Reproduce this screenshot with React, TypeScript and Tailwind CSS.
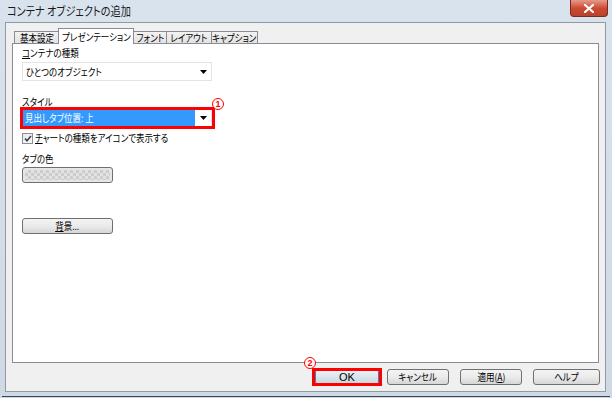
import React from 'react';

const jp = "font-['Meiryo_UI','Noto_Sans_CJK_JP','Noto_Sans',sans-serif] [font-feature-settings:'palt']";

const tabs = [
  { label: '基本設定', w: 'w-[45px]' },
  { label: 'プレゼンテーション', w: 'w-[76px]', active: true },
  { label: 'フォント', w: 'w-[34px]' },
  { label: 'レイアウト', w: 'w-[46px]' },
  { label: 'キャプション', w: 'w-[47px]' },
];

// Meiryo UI is narrower than Noto CJK, squeeze the text a bit
function Sq({ children, center }: { children: React.ReactNode; center?: boolean }) {
  return (
    <span className={`inline-block whitespace-nowrap scale-x-[0.85] ${center ? 'origin-center' : 'origin-left'}`}>
      {children}
    </span>
  );
}

function Arrow() {
  return (
    <svg width="7" height="4" viewBox="0 0 7 4">
      <path d="M0 0h7L3.5 4z" fill="#000" />
    </svg>
  );
}

function Mark({ n }: { n: string }) {
  return (
    <span className="flex h-[12px] w-[12px] items-center justify-center rounded-full border-[1.5px] border-[#ff0000] bg-white font-['Liberation_Sans',sans-serif] text-[9px] font-bold leading-none text-[#ff0000]">
      {n}
    </span>
  );
}

function Btn({ children, w, primary }: { children: React.ReactNode; w: string; primary?: boolean }) {
  return (
    <div
      className={`${w} flex h-[16px] items-center justify-center rounded-[3px] border text-[10px] leading-[14px] ${
        primary
          ? 'border-[#3c7fb1] bg-gradient-to-b from-[#edf3f7] to-[#c6d6e2]'
          : 'border-[#707070] bg-gradient-to-b from-[#f3f3f3] via-[#ebebeb] to-[#d6d6d6]'
      }`}
    >
      {children}
    </div>
  );
}

export default function App() {
  return (
    <div className={`${jp} flex h-[398px] w-[612px] flex-col bg-gradient-to-b from-[#d9e3ed] to-[#cfd9e3] text-black`}>
      {/* title bar */}
      <div className="flex h-[22px] items-start pl-[7px]">
        <span className="mt-[4px] text-[12px] leading-[14px] text-[#1a1a1a]">
          <Sq>コンテナ オブジェクトの追加</Sq>
        </span>
        <div className="ml-auto mr-[4px] flex h-[17px] w-[38px] items-center justify-center rounded-b-[4px] border border-t-0 border-[#7a2a1e] bg-gradient-to-b from-[#e59a8a] via-[#cc4a33] to-[#b9432d]">
          <svg width="10" height="9" viewBox="0 0 10 9">
            <path d="M1 1l8 7M9 1L1 8" stroke="#fff" strokeWidth="2.2" strokeLinecap="square" />
          </svg>
        </div>
      </div>

      {/* client area */}
      <div className="mx-[5px] flex h-[370px] w-[601px] flex-col border border-[#8f9aa6] bg-[#f0f0f0] px-[6px] pt-[5px]">
        {/* tab strip */}
        <div className="flex h-[15px] items-end pl-[2px]">
          {tabs.map((t, i) =>
            t.active ? (
              <div
                key={i}
                className={`${t.w} relative z-10 -mb-px -ml-px flex h-[16px] items-start justify-center whitespace-nowrap border border-b-0 border-[#898c95] bg-white pt-[1px] text-[10px] leading-[13px]`}
              >
                <Sq center>{t.label}</Sq>
              </div>
            ) : (
              <div
                key={i}
                className={`${t.w} ${i > 0 ? '-ml-px' : ''} flex h-[12px] items-center justify-center whitespace-nowrap border border-b-0 border-[#898c95] bg-gradient-to-b from-[#f2f2f2] to-[#e3e3e3] text-[10px] leading-[12px]`}
              >
                <Sq center>{t.label}</Sq>
              </div>
            )
          )}
        </div>

        {/* tab panel */}
        <div className="flex h-[320px] w-[587px] flex-col border border-[#898c95] bg-white pl-[9px] text-[10px]">
          <div className="mt-[3px] h-[12px] leading-[12px]">
            <Sq>
              <span className="underline">コ</span>ンテナの種類
            </Sq>
          </div>
          <div className="mt-[3px] flex h-[19px] w-[190px] items-center justify-between border border-[#e3e3e3] bg-white pl-[3px] pr-[4px]">
            <span className="leading-[13px]">
              <Sq>ひとつのオブジェクト</Sq>
            </span>
            <Arrow />
          </div>

          <div className="mt-[15px] h-[12px] leading-[12px]">
            <Sq>
              <span className="underline">ス</span>タイル
            </Sq>
          </div>
          <div className="relative h-[19px] w-[190px]">
            <div className="flex h-full w-full border border-[#e3e3e3]">
              <div className="flex flex-1 items-center bg-[#3399ff] pl-[2px] text-white">
                <Sq>見出しタブ位置: 上</Sq>
              </div>
              <div className="flex w-[16px] items-center justify-center bg-white">
                <Arrow />
              </div>
            </div>
            {/* annotation */}
            <div className="absolute -left-[2px] -top-[1px] h-[22px] w-[195px] border-[3px] border-[#ff0000]" />
            <div className="absolute left-[190px] -top-[10px]">
              <Mark n="1" />
            </div>
          </div>

          <div className="mt-[5px] flex h-[12px] items-center gap-[2px]">
            <div className="flex h-[11px] w-[11px] items-center justify-center border border-[#8f8f8f] bg-gradient-to-br from-[#e8e8e8] to-[#fafafa]">
              <svg width="8" height="7" viewBox="0 0 8 7">
                <path d="M1 3.5l2 2.2L7 1" fill="none" stroke="#333c5a" strokeWidth="1.6" />
              </svg>
            </div>
            <span className="leading-[12px]">
              <Sq>
                <span className="underline">チ</span>ャートの種類をアイコンで表示する
              </Sq>
            </span>
          </div>

          <div className="mt-[9px] h-[12px] leading-[12px]">
            <Sq>タブの色</Sq>
          </div>
          <div className="mt-[2px] h-[16px] w-[91px] rounded-[3px] border border-[#707070] bg-[#e6e6e6] p-[2px]">
            <div className="h-full w-full rounded-[1px] bg-[repeating-conic-gradient(#cdcdcd_0%_25%,#e2e2e2_0%_50%)] bg-[length:6px_6px]" />
          </div>

          <div className="mt-[35px]">
            <Btn w="w-[91px]">
              <Sq center>
                <span className="underline">背</span>景...
              </Sq>
            </Btn>
          </div>
        </div>

        {/* button row */}
        <div className="-mr-px mt-[6px] flex justify-end">
          <div className="relative">
            <Btn w="w-[64px]" primary>
              <span className="font-['Liberation_Sans',sans-serif] text-[11px]">OK</span>
            </Btn>
            <div className="absolute -left-[3px] -top-[1px] h-[18px] w-[70px] border-[3px] border-[#ff0000]" />
            <div className="absolute -left-[11px] -top-[12px]">
              <Mark n="2" />
            </div>
          </div>
          <div className="ml-[8px]">
            <Btn w="w-[62px]">
              <Sq center>キャンセル</Sq>
            </Btn>
          </div>
          <div className="ml-[11px]">
            <Btn w="w-[62px]">
              <Sq center>
                適用(<span className="underline">A</span>)
              </Sq>
            </Btn>
          </div>
          <div className="ml-[11px]">
            <Btn w="w-[67px]">
              <Sq center>ヘルプ</Sq>
            </Btn>
          </div>
        </div>
      </div>
      <div className="mx-[2px] mb-[1px] mt-auto h-px bg-[#3b4550]" />
    </div>
  );
}
